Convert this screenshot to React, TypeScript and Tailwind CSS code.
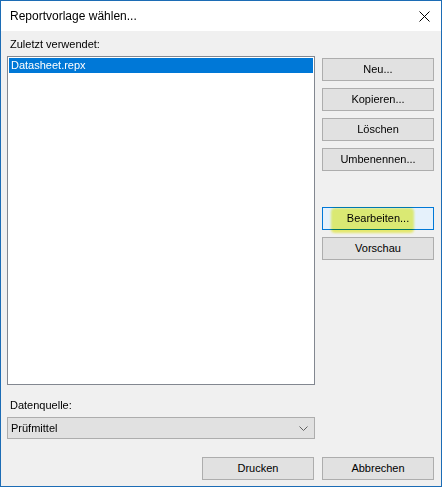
import React from 'react';

const ui = { fontFamily: '"Liberation Sans", Arial, sans-serif' };

function WinButton({
  children,
  focused,
  marked,
}: {
  children: React.ReactNode;
  focused?: boolean;
  marked?: boolean;
}) {
  return (
    <button
      className={
        focused
          ? 'relative h-[23px] w-[112px] border border-[#0078d7] bg-[#e5f1fb] text-[11px] text-black'
          : 'relative h-[23px] w-[112px] border border-[#adadad] bg-[#e1e1e1] text-[11px] text-black'
      }
      style={ui}
    >
      {children}
      {marked && (
        <span className="pointer-events-none absolute left-[8px] top-[0px] h-[25px] w-[83px] rounded-[4px] bg-[#f0f552] opacity-80 mix-blend-multiply blur-[1px]" />
      )}
    </button>
  );
}

export default function App() {
  return (
    <div className="flex h-[487px] w-[442px] flex-col border border-[#1c6cb5] bg-[#f0f0f0]">
      {/* title bar */}
      <div className="flex h-[30px] items-center justify-between bg-white pl-[9px] pr-[10px]">
        <span className="text-[12px] text-black" style={ui}>
          Reportvorlage wählen...
        </span>
        <svg width="11" height="11" viewBox="0 0 11 11" className="mr-[1px]">
          <path d="M0.5 0.5 L10.5 10.5 M10.5 0.5 L0.5 10.5" stroke="#000" strokeWidth="1" />
        </svg>
      </div>

      <div className="flex flex-1 flex-col pl-[6px] pr-[7px] pt-[4px]">
        <div className="flex gap-[7px]">
          {/* left column */}
          <div className="flex w-[308px] flex-col">
            <div className="h-[21px] pl-[3px] pt-[1px] text-[11px] text-black" style={ui}>
              Zuletzt verwendet:
            </div>
            <div className="h-[329px] border border-[#828790] bg-white p-[1px]">
              <div className="h-[15px] bg-[#0078d7] pl-[2px] text-[11px] leading-[15px] text-white" style={ui}>
                Datasheet.repx
              </div>
            </div>
            <div className="h-[32px] pl-[3px] pt-[12px] text-[11px] text-black" style={ui}>
              Datenquelle:
            </div>
            <div className="flex h-[22px] items-center justify-between border border-[#adadad] bg-[#e1e1e1] pl-[3px] pr-[6px]">
              <span className="text-[11px] text-black" style={ui}>
                Prüfmittel
              </span>
              <svg width="9" height="5" viewBox="0 0 9 5">
                <path d="M0.5 0.5 L4.5 4.5 L8.5 0.5" fill="none" stroke="#606060" strokeWidth="1" />
              </svg>
            </div>
          </div>

          {/* right column */}
          <div className="flex w-[112px] flex-col pt-[23px]">
            <div className="flex flex-col gap-[7px]">
              <WinButton>Neu...</WinButton>
              <WinButton>Kopieren...</WinButton>
              <WinButton>Löschen</WinButton>
              <WinButton>Umbenennen...</WinButton>
            </div>
            <div className="mt-[36px] flex flex-col gap-[7px]">
              <WinButton focused marked>
                Bearbeiten...
              </WinButton>
              <WinButton>Vorschau</WinButton>
            </div>
          </div>
        </div>

        <div className="mt-[18px] flex justify-end gap-[8px]">
          <WinButton>Drucken</WinButton>
          <WinButton>Abbrechen</WinButton>
        </div>
      </div>
    </div>
  );
}
